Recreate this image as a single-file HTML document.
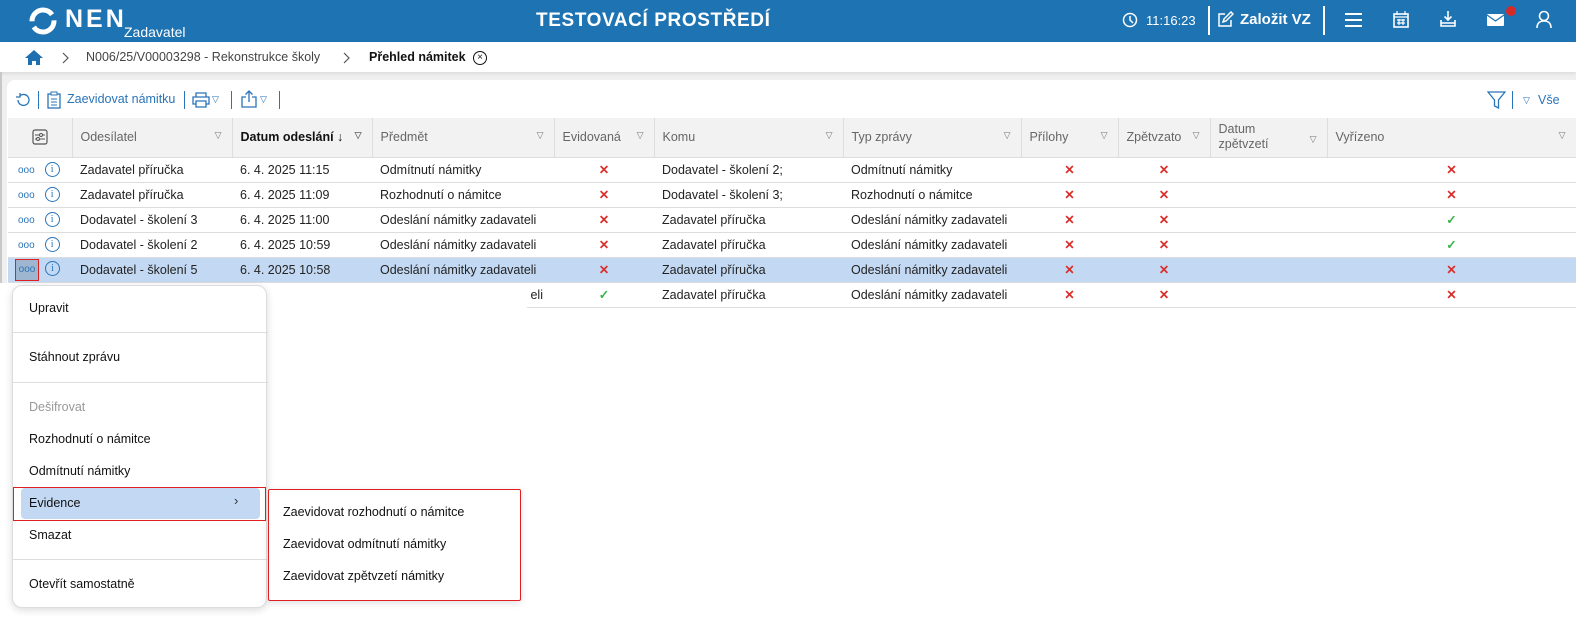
<!DOCTYPE html>
<html><head><meta charset="utf-8"><style>
*{box-sizing:border-box;margin:0;padding:0}
body{width:1576px;height:617px;overflow:hidden;background:#efefef;font-family:"Liberation Sans",Arial,sans-serif;font-size:12.5px;color:#222;position:relative}
.abs{position:absolute}
#top{left:0;top:0;width:1576px;height:42px;background:#1e73b2;color:#fff}
#bc{left:0;top:42px;width:1576px;height:30px;background:#fff;box-shadow:0 2px 3px rgba(0,0,0,.08)}
#card{left:7px;top:80px;width:1569px;height:537px;background:#fff;border-radius:8px 0 0 0}
table{border-collapse:collapse;table-layout:fixed;position:absolute;left:8px;top:118px;width:1568px}
th{background:#f2f2f2;height:39px;font-weight:normal;color:#666;text-align:left;padding-left:8px;border-right:1px solid #ddd;border-bottom:1px solid #ddd;position:relative;font-size:12.5px}
th .t{position:absolute;right:10px;top:12px;font-size:9px;color:#777}
td{height:25px;border-bottom:1px solid #ddd;padding-left:8px;white-space:nowrap;overflow:hidden;font-size:12.5px;color:#222}
td.c{text-align:center;padding-left:0}
.x{color:#d9302c;font-weight:bold;font-size:12.5px}
.ok{color:#3bb54a;font-weight:bold}
tr.sel td{background:#c3d9f3}
.dots{color:#2a74b8;font-size:10px}
.info{display:inline-block;width:15px;height:15px;border:1.3px solid #2a74b8;border-radius:50%;color:#2a74b8;font-size:10px;text-align:center;line-height:13px;font-family:"Liberation Serif",serif;margin-left:10px;vertical-align:middle}
#menu{left:12px;top:285px;width:255px;height:323px;background:#fff;border:1px solid #ddd;border-radius:10px;box-shadow:0 2px 8px rgba(0,0,0,.15)}
.mi{position:absolute;left:16px;font-size:12.5px;color:#111}
.sep{position:absolute;left:0;width:255px;height:1px;background:#ddd}
#sub{left:268px;top:489px;width:253px;height:112px;background:#fff;border:1px solid #e02020;border-radius:2px;box-shadow:0 2px 8px rgba(0,0,0,.12)}
.si{position:absolute;left:14px;font-size:12.5px;color:#111}
</style></head><body>
<div id="top" class="abs">
 <svg class="abs" style="left:27px;top:6px" width="32" height="30" viewBox="0 0 32 30"><circle cx="16" cy="15" r="11" fill="none" stroke="#fff" stroke-width="5" stroke-dasharray="28 6"/></svg>
 <div class="abs" style="left:65px;top:5px;font-size:25px;font-weight:bold;letter-spacing:3px">NEN</div>
 <div class="abs" style="left:124px;top:24px;font-size:14px">Zadavatel</div>
 <div class="abs" style="left:536px;top:10px;font-size:19px;font-weight:bold;letter-spacing:.6px">TESTOVACÍ PROSTŘEDÍ</div>
 <svg class="abs" style="left:1122px;top:12px" width="16" height="16" viewBox="0 0 16 16"><circle cx="8" cy="8" r="6.5" fill="none" stroke="#fff" stroke-width="1.5"/><path d="M8 4v4l3 3" stroke="#fff" stroke-width="1.5" fill="none"/></svg>
 <div class="abs" style="left:1146px;top:13px;font-size:13px">11:16:23</div>
 <div class="abs" style="left:1208px;top:6px;width:2px;height:29px;background:#fff"></div>
 <svg class="abs" style="left:1216px;top:11px" width="18" height="18" viewBox="0 0 18 18"><path d="M9 3H3v12h12V9M7 11l1-3 7-7 2 2-7 7z" stroke="#fff" stroke-width="1.5" fill="none"/></svg>
 <div class="abs" style="left:1240px;top:11px;font-size:15px;font-weight:bold">Založit VZ</div>
 <div class="abs" style="left:1323px;top:6px;width:2px;height:29px;background:#fff"></div>
 <svg class="abs" style="left:1345px;top:13px" width="17" height="14"><path d="M0 1h17M0 7h17M0 13h17" stroke="#fff" stroke-width="2"/></svg>
 <svg class="abs" style="left:1393px;top:11px" width="16" height="17"><rect x="1" y="3" width="14" height="13" fill="none" stroke="#fff" stroke-width="1.6"/><path d="M1 6h14M4 0v4M12 0v4M4 9h8M4 12h8M6 8v6M10 8v6" stroke="#fff" stroke-width="1.2"/></svg>
 <svg class="abs" style="left:1440px;top:11px" width="16" height="17"><path d="M8 0v9M4.5 5.5 8 9l3.5-3.5M1 9v6h14V9M1 12h14" stroke="#fff" stroke-width="1.6" fill="none"/></svg>
 <svg class="abs" style="left:1487px;top:14px" width="17" height="12"><rect x="0" y="0" width="17" height="12" rx="1" fill="#fff"/><path d="M0 1l8.5 6L17 1" stroke="#1e73b2" stroke-width="1.3" fill="none"/></svg>
 <div class="abs" style="left:1506px;top:6px;width:10px;height:10px;border-radius:50%;background:#d42a2a"></div>
 <svg class="abs" style="left:1536px;top:10px" width="16" height="19"><circle cx="8" cy="6" r="4.5" fill="none" stroke="#fff" stroke-width="1.6"/><path d="M1 18c0-5 3-7 7-7s7 2 7 7" fill="none" stroke="#fff" stroke-width="1.6"/></svg>
</div>
<div id="bc" class="abs">
 <svg class="abs" style="left:25px;top:8px" width="18" height="15"><path d="M9 0 0 8h3v7h4v-4h4v4h4V8h3z" fill="#1e6fb0"/></svg>
 <svg class="abs" style="left:62px;top:10px" width="8" height="12"><path d="M1 1l5 5-5 5" fill="none" stroke="#555" stroke-width="1.2"/></svg>
 <div class="abs" style="left:86px;top:8px;color:#444;font-size:12.5px">N006/25/V00003298 - Rekonstrukce školy</div>
 <svg class="abs" style="left:343px;top:10px" width="8" height="12"><path d="M1 1l5 5-5 5" fill="none" stroke="#555" stroke-width="1.2"/></svg>
 <div class="abs" style="left:369px;top:8px;color:#111;font-size:12.5px;font-weight:bold">Přehled námitek</div>
 <div class="abs" style="left:473px;top:9px;width:14px;height:14px;border:1.3px solid #111;border-radius:50%;font-size:10px;text-align:center;line-height:11px">×</div>
</div>
<div id="card" class="abs"></div>
<div class="abs" style="left:0;top:72px;width:2px;height:545px;background:#c8c8c8"></div>
<svg class="abs" style="left:15px;top:92px" width="16" height="16"><path d="M3 8a5.5 5.5 0 1 0 2-4.3M5 1v4H1" fill="none" stroke="#2a74b8" stroke-width="1.3"/></svg>
<div class="abs" style="left:38px;top:91px;width:1px;height:18px;background:#2a74b8"></div>
<svg class="abs" style="left:47px;top:91px" width="14" height="18"><rect x="1" y="3" width="12" height="14" fill="none" stroke="#2a74b8" stroke-width="1.3"/><rect x="4" y="1" width="6" height="3" fill="#fff" stroke="#2a74b8"/><path d="M4 8h6M4 11h6M4 14h6" stroke="#2a74b8"/></svg>
<div class="abs" style="left:67px;top:92px;color:#2a74b8;font-size:12.5px">Zaevidovat námitku</div>
<div class="abs" style="left:184px;top:91px;width:1px;height:18px;background:#2a74b8"></div>
<svg class="abs" style="left:192px;top:92px" width="18" height="16"><path d="M4 5V1h10v4M4 12H1V5h16v7h-3M4 9h10v6H4z" fill="none" stroke="#2a74b8" stroke-width="1.3"/></svg>
<div class="abs" style="left:212px;top:94px;color:#2a74b8;font-size:9px">▽</div>
<div class="abs" style="left:231px;top:91px;width:1px;height:18px;background:#2a74b8"></div>
<svg class="abs" style="left:241px;top:90px" width="16" height="18"><path d="M8 12V1M4.5 4.5 8 1l3.5 3.5M5 7H1v10h14V7h-4" fill="none" stroke="#2a74b8" stroke-width="1.3"/></svg>
<div class="abs" style="left:260px;top:94px;color:#2a74b8;font-size:9px">▽</div>
<div class="abs" style="left:279px;top:91px;width:1px;height:18px;background:#2a74b8"></div>
<svg class="abs" style="left:1487px;top:91px" width="19" height="18"><path d="M1 1h17l-6.5 8v8l-4-2V9z" fill="none" stroke="#2a74b8" stroke-width="1.3"/></svg>
<div class="abs" style="left:1512px;top:91px;width:1px;height:18px;background:#2a74b8"></div>
<div class="abs" style="left:1523px;top:95px;color:#2a74b8;font-size:9px">▽</div>
<div class="abs" style="left:1538px;top:93px;color:#2a74b8;font-size:12.5px">Vše</div>

<table>
<colgroup><col style="width:64px"><col style="width:160px"><col style="width:140px"><col style="width:182px"><col style="width:100px"><col style="width:189px"><col style="width:178px"><col style="width:97px"><col style="width:92px"><col style="width:117px"><col style="width:249px"></colgroup>
<tr><th style="padding-left:0"><svg style="display:block;margin:0 auto" width="16" height="16"><rect x="1" y="1" width="14" height="14" rx="2" fill="none" stroke="#555" stroke-width="1.2"/><path d="M3 6h10M3 10h10" stroke="#555"/><circle cx="9" cy="6" r="1.5" fill="#f2f2f2" stroke="#555"/><circle cx="6" cy="10" r="1.5" fill="#f2f2f2" stroke="#555"/></svg></th>
<th>Odesílatel<span class="t">▽</span></th>
<th style="color:#111;font-weight:bold">Datum odeslání <span style="font-weight:normal">↓</span><span class="t">▽</span></th>
<th>Předmět<span class="t">▽</span></th>
<th>Evidovaná<span class="t">▽</span></th>
<th>Komu<span class="t">▽</span></th>
<th>Typ zprávy<span class="t">▽</span></th>
<th>Přílohy<span class="t">▽</span></th>
<th>Zpětvzato<span class="t">▽</span></th>
<th style="line-height:15px">Datum<br>zpětvzetí<span class="t" style="top:14px">▽</span></th>
<th>Vyřízeno<span class="t">▽</span></th></tr>
<tr><td style="padding-left:10px"><span class="dots">ooo</span><span class="info">i</span></td><td>Zadavatel příručka</td><td>6. 4. 2025 11:15</td><td>Odmítnutí námitky</td><td class="c x">✕</td><td>Dodavatel - školení 2;</td><td>Odmítnutí námitky</td><td class="c x">✕</td><td class="c x">✕</td><td></td><td class="c x">✕</td></tr>
<tr><td style="padding-left:10px"><span class="dots">ooo</span><span class="info">i</span></td><td>Zadavatel příručka</td><td>6. 4. 2025 11:09</td><td>Rozhodnutí o námitce</td><td class="c x">✕</td><td>Dodavatel - školení 3;</td><td>Rozhodnutí o námitce</td><td class="c x">✕</td><td class="c x">✕</td><td></td><td class="c x">✕</td></tr>
<tr><td style="padding-left:10px"><span class="dots">ooo</span><span class="info">i</span></td><td>Dodavatel - školení 3</td><td>6. 4. 2025 11:00</td><td>Odeslání námitky zadavateli</td><td class="c x">✕</td><td>Zadavatel příručka</td><td>Odeslání námitky zadavateli</td><td class="c x">✕</td><td class="c x">✕</td><td></td><td class="c ok">✓</td></tr>
<tr><td style="padding-left:10px"><span class="dots">ooo</span><span class="info">i</span></td><td>Dodavatel - školení 2</td><td>6. 4. 2025 10:59</td><td>Odeslání námitky zadavateli</td><td class="c x">✕</td><td>Zadavatel příručka</td><td>Odeslání námitky zadavateli</td><td class="c x">✕</td><td class="c x">✕</td><td></td><td class="c ok">✓</td></tr>
<tr class="sel"><td style="padding-left:7px"><span class="dots" style="display:inline-block;width:24px;height:22px;background:#9fb6d0;border:1px solid #e02020;text-align:center;line-height:20px">ooo</span><span class="info" style="margin-left:6px">i</span></td><td>Dodavatel - školení 5</td><td>6. 4. 2025 10:58</td><td>Odeslání námitky zadavateli</td><td class="c x">✕</td><td>Zadavatel příručka</td><td>Odeslání námitky zadavateli</td><td class="c x">✕</td><td class="c x">✕</td><td></td><td class="c x">✕</td></tr>
<tr><td></td><td></td><td></td><td style="text-align:right;padding-right:11px">eli</td><td class="c ok">✓</td><td>Zadavatel příručka</td><td>Odeslání námitky zadavateli</td><td class="c x">✕</td><td class="c x">✕</td><td></td><td class="c x">✕</td></tr>
</table>
<div class="abs" style="left:0;top:283px;width:527px;height:334px;background:#fff"></div>

<div id="menu" class="abs">
 <div class="mi" style="top:15px">Upravit</div>
 <div class="sep" style="top:46px"></div>
 <div class="mi" style="top:64px">Stáhnout zprávu</div>
 <div class="sep" style="top:96px"></div>
 <div class="mi" style="top:114px;color:#999">Dešifrovat</div>
 <div class="mi" style="top:146px">Rozhodnutí o námitce</div>
 <div class="mi" style="top:178px">Odmítnutí námitky</div>
 <div class="abs" style="left:8px;top:202px;width:239px;height:31px;background:#c3d9f3;border-radius:4px"></div>
 <div class="abs" style="left:0;top:201px;width:253px;height:34px;border:1px solid #e02020"></div>
 <div class="mi" style="top:210px">Evidence</div>
 <div class="abs" style="left:221px;top:207px;font-size:13px;color:#333">›</div>
 <div class="mi" style="top:242px">Smazat</div>
 <div class="sep" style="top:273px"></div>
 <div class="mi" style="top:291px">Otevřít samostatně</div>
</div>
<div id="sub" class="abs">
 <div class="si" style="top:15px">Zaevidovat rozhodnutí o námitce</div>
 <div class="si" style="top:47px">Zaevidovat odmítnutí námitky</div>
 <div class="si" style="top:79px">Zaevidovat zpětvzetí námitky</div>
</div>
</body></html>
